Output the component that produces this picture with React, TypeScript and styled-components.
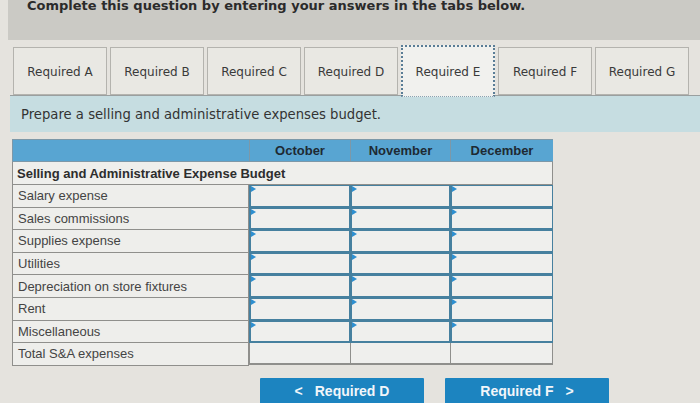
import React from "react";
import styled, { createGlobalStyle } from "styled-components";

const Global = createGlobalStyle`
  html, body { margin: 0; padding: 0; }
  body {
    background: #e5e3de;
    width: 700px;
    height: 403px;
    overflow: hidden;
  }
`;

const Page = styled.div`
  display: flex;
  flex-direction: column;
  padding-left: 8px;
`;

const TopBand = styled.div`
  height: 40px;
  background: #cbcac5;
  padding-left: 19px;
  overflow: hidden;
`;

const Heading = styled.div`
  font-family: "DejaVu Sans", Verdana, sans-serif;
  font-weight: bold;
  font-size: 13px;
  color: #2b2b2b;
  margin-top: -2px;
`;

const TabRow = styled.div`
  display: flex;
  gap: 3px;
  padding: 5px 0 0 5px;
  height: 50px;
  align-items: flex-end;
  position: relative;
  z-index: 2;
`;

const Tab = styled.div<{ $active?: boolean }>`
  width: 94px;
  height: ${(p) => (p.$active ? 52 : 48)}px;
  box-sizing: border-box;
  display: flex;
  align-items: center;
  justify-content: center;
  padding-top: 1px;
  font-family: "DejaVu Sans", Verdana, sans-serif;
  font-size: 12px;
  color: #3a3a3a;
  background: ${(p) => (p.$active ? "#f1f1ee" : "#e9e8e3")};
  border: ${(p) => (p.$active ? "2px dotted #5a7d96" : "1px solid #b4b3ae")};
  border-bottom: ${(p) => (p.$active ? "1px dotted #8aa3b3" : "1px solid #b4b3ae")};
  margin-bottom: ${(p) => (p.$active ? -2 : 0)}px;
`;

const Panel = styled.div`
  margin-left: 2px;
  height: 36px;
  background: #c6dde1;
  border-top: 1px solid #9a9f9f;
  display: flex;
  align-items: center;
  padding-left: 11px;
  font-family: "DejaVu Sans", Verdana, sans-serif;
  font-size: 13.2px;
  color: #333;
`;

const Table = styled.div`
  margin: 7px 0 0 4px;
  width: 541px;
  display: grid;
  grid-template-columns: 237px 101px 100px 103px;
  font-family: "Liberation Sans", Arial, sans-serif;
  font-size: 13px;
  color: #444;
`;

const HeadCell = styled.div`
  height: 23px;
  box-sizing: border-box;
  background: #58a5d2;
  border: 1px solid #7d98a8;
  border-right-width: 0;
  display: flex;
  align-items: center;
  justify-content: center;
  font-weight: bold;
  color: #1e2a33;
  &:last-child { border-right-width: 1px; }
`;

const TitleCell = styled.div`
  grid-column: 1 / -1;
  height: 23px;
  box-sizing: border-box;
  background: #efefec;
  border: 1px solid #8f8f8c;
  border-top: 0;
  display: flex;
  align-items: center;
  padding-left: 4px;
  font-weight: bold;
  color: #2d2d2d;
`;

const LabelCell = styled.div`
  height: 22.6px;
  box-sizing: border-box;
  background: #eeeeeb;
  border: 1px solid #8f8f8c;
  border-top: 0;
  display: flex;
  align-items: center;
  padding-left: 5px;
`;

const InputCell = styled.div`
  position: relative;
  height: 22.6px;
  box-sizing: border-box;
  background: #efefed;
  border: 2px solid #46809f;
  border-top-width: 1px;
  border-right-width: 1px;
`;

const Flag = styled.span`
  position: absolute;
  left: 0;
  top: 0;
  width: 0;
  height: 0;
  border-top: 3px solid transparent;
  border-bottom: 3px solid transparent;
  border-left: 5px solid #2e8fd0;
`;

const TotalCell = styled.div`
  height: 22px;
  box-sizing: border-box;
  background: #efefed;
  border-left: 1px solid #8f8f8c;
  border-bottom: 2px solid #8f8f8c;
  &:last-child { border-right: 1px solid #8f8f8c; }
`;

const ButtonRow = styled.div`
  display: flex;
  gap: 21px;
  margin: 12px 0 0 252px;
`;

const NavButton = styled.div`
  width: 164px;
  height: 30px;
  background: #1c84c0;
  border-radius: 1px;
  display: flex;
  justify-content: center;
  padding-top: 5px;
  box-sizing: border-box;
  font-family: "Liberation Sans", Arial, sans-serif;
  font-weight: bold;
  font-size: 14px;
  color: #f2f6fa;
  gap: 12px;
`;

const tabs = ["A", "B", "C", "D", "E", "F", "G"];
const rows = [
  "Salary expense",
  "Sales commissions",
  "Supplies expense",
  "Utilities",
  "Depreciation on store fixtures",
  "Rent",
  "Miscellaneous",
];

export default function App() {
  return (
    <>
      <Global />
      <Page>
        <TopBand>
          <Heading>Complete this question by entering your answers in the tabs below.</Heading>
        </TopBand>
        <TabRow>
          {tabs.map((t) => (
            <Tab key={t} $active={t === "E"}>
              Required {t}
            </Tab>
          ))}
        </TabRow>
        <Panel>Prepare a selling and administrative expenses budget.</Panel>
        <Table>
          <HeadCell />
          <HeadCell>October</HeadCell>
          <HeadCell>November</HeadCell>
          <HeadCell>December</HeadCell>
          <TitleCell>Selling and Administrative Expense Budget</TitleCell>
          {rows.map((r) => (
            <React.Fragment key={r}>
              <LabelCell>{r}</LabelCell>
              {[0, 1, 2].map((i) => (
                <InputCell key={i}>
                  <Flag />
                </InputCell>
              ))}
            </React.Fragment>
          ))}
          <LabelCell>Total S&amp;A expenses</LabelCell>
          <TotalCell />
          <TotalCell />
          <TotalCell />
        </Table>
        <ButtonRow>
          <NavButton>
            <span>&lt;</span>
            <span>Required D</span>
          </NavButton>
          <NavButton>
            <span>Required F</span>
            <span>&gt;</span>
          </NavButton>
        </ButtonRow>
      </Page>
    </>
  );
}
